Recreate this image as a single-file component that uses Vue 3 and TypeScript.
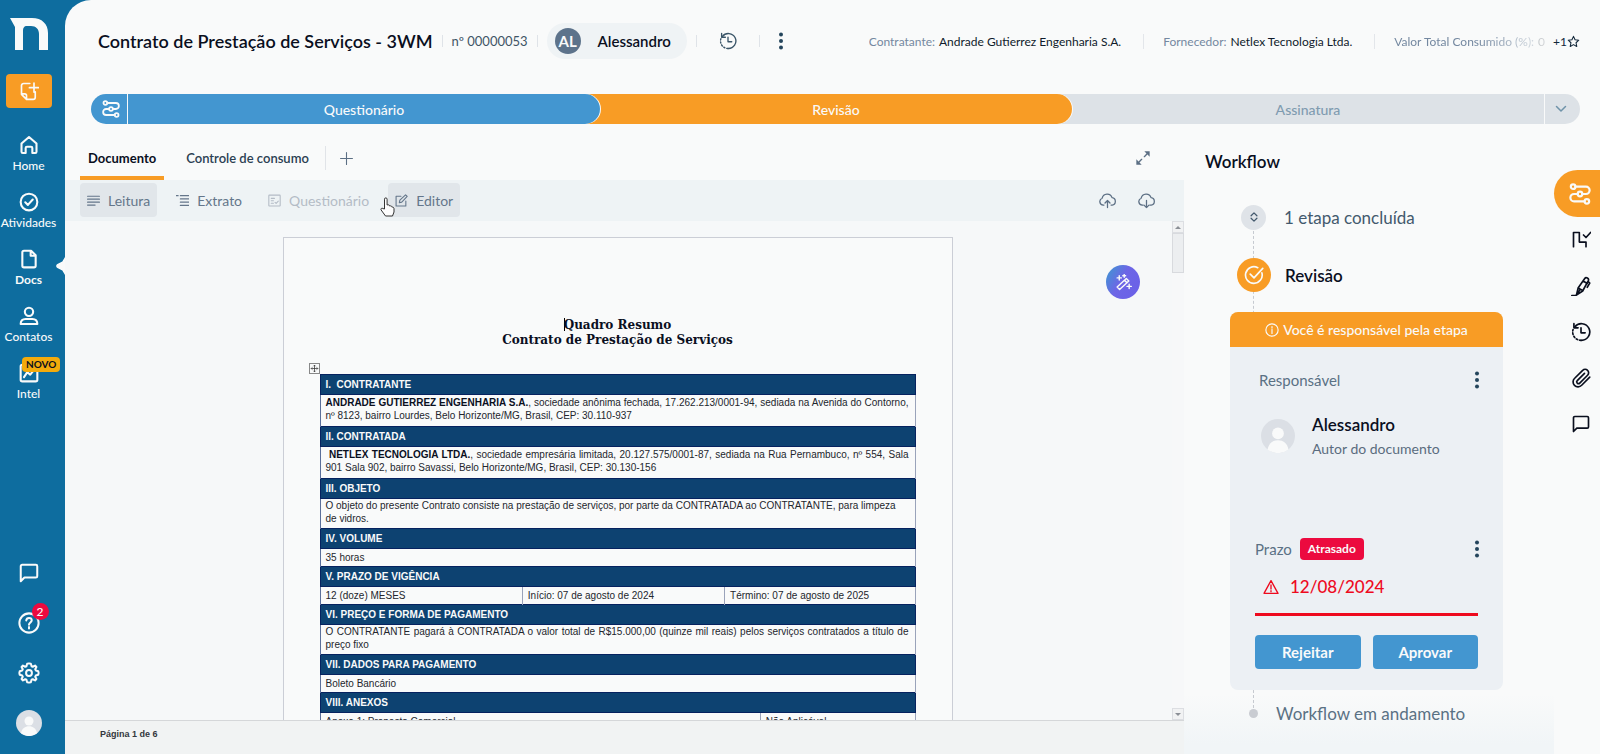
<script setup lang="ts">
import { ref } from 'vue'

interface NavItem {
  id: string
  label: string
  icon: string
  badge?: string
}

interface DocCell {
  text: string
  lead?: string
  span: number
}

interface DocSection {
  title: string
  size: 'tall' | 'mid' | 'short'
  justify?: boolean
  cells: DocCell[]
}

const nav: NavItem[] = [
  { id: 'home', label: 'Home', icon: 'i-home' },
  { id: 'atividades', label: 'Atividades', icon: 'i-check-circle' },
  { id: 'docs', label: 'Docs', icon: 'i-file' },
  { id: 'contatos', label: 'Contatos', icon: 'i-user' },
  { id: 'intel', label: 'Intel', icon: 'i-chart', badge: 'NOVO' },
]
const activeNav = ref('docs')

const tabs = ['Documento', 'Controle de consumo']
const activeTab = ref('Documento')

const tools = [
  { label: 'Leitura', icon: 'i-lines', filled: true, disabled: false },
  { label: 'Extrato', icon: 'i-list', filled: false, disabled: false },
  { label: 'Questionário', icon: 'i-form', filled: false, disabled: true },
  { label: 'Editor', icon: 'i-edit', filled: true, disabled: false },
]

const rail = [
  { label: 'Workflow', icon: 'i-flow' },
  { label: 'Tarefas', icon: 'i-tasks' },
  { label: 'Assinaturas', icon: 'i-pen' },
  { label: 'Histórico', icon: 'i-history' },
  { label: 'Anexos', icon: 'i-clip' },
  { label: 'Comentários', icon: 'i-chat' },
]
const activePanel = ref('Workflow')

const sections: DocSection[] = [
  {
    title: 'I.  CONTRATANTE',
    size: 'tall',
    justify: true,
    cells: [
      {
        lead: 'ANDRADE GUTIERREZ ENGENHARIA S.A.',
        text: ', sociedade anônima fechada, 17.262.213/0001-94, sediada na Avenida do Contorno, nº 8123, bairro Lourdes, Belo Horizonte/MG, Brasil, CEP: 30.110-937',
        span: 4,
      },
    ],
  },
  {
    title: 'II. CONTRATADA',
    size: 'tall',
    justify: true,
    cells: [
      {
        lead: '\u00a0NETLEX TECNOLOGIA LTDA.',
        text: ', sociedade empresária limitada, 20.127.575/0001-87, sediada na Rua Pernambuco, nº 554, Sala 901 Sala 902, bairro Savassi, Belo Horizonte/MG, Brasil, CEP: 30.130-156',
        span: 4,
      },
    ],
  },
  {
    title: 'III. OBJETO',
    size: 'mid',
    cells: [
      {
        text: 'O objeto do presente Contrato consiste na prestação de serviços, por parte da CONTRATADA ao CONTRATANTE, para limpeza de vidros.',
        span: 4,
      },
    ],
  },
  { title: 'IV. VOLUME', size: 'short', cells: [{ text: '35 horas', span: 4 }] },
  {
    title: 'V. PRAZO DE VIGÊNCIA',
    size: 'short',
    cells: [
      { text: '12 (doze) MESES', span: 1 },
      { text: 'Início: 07 de agosto de 2024', span: 1 },
      { text: 'Término: 07 de agosto de 2025', span: 2 },
    ],
  },
  {
    title: 'VI. PREÇO E FORMA DE PAGAMENTO',
    size: 'mid',
    justify: true,
    cells: [
      {
        text: 'O CONTRATANTE pagará à CONTRATADA o valor total de R$15.000,00 (quinze mil reais) pelos serviços contratados a título de preço fixo',
        span: 4,
      },
    ],
  },
  { title: 'VII. DADOS PARA PAGAMENTO', size: 'short', cells: [{ text: 'Boleto Bancário', span: 4 }] },
  {
    title: 'VIII. ANEXOS',
    size: 'short',
    cells: [
      { text: 'Anexo 1: Proposta Comercial', span: 3 },
      { text: 'Não Aplicável', span: 1 },
    ],
  },
]
</script>

<template>
  <div class="app">
    <svg class="sprite" aria-hidden="true">
      <symbol id="i-home" viewBox="0 0 24 24"><path d="M3 10.2 12 2.5l9 7.7V20a1.5 1.5 0 0 1-1.5 1.5H16v-6a1.5 1.5 0 0 0-1.500-1.500h-5A1.500 1.500 0 0 0 8 15.500v6H4.500A1.500 1.500 0 0 1 3 20z" /></symbol>
      <symbol id="i-check-circle" viewBox="0 0 24 24"><circle cx="12" cy="12" r="10" /><path d="m7.500 12.300 3.200 3.200 5.800-6.500" /></symbol>
      <symbol id="i-file" viewBox="0 0 24 24"><path d="M14.500 2H6a2 2 0 0 0-2 2v16a2 2 0 0 0 2 2h12a2 2 0 0 0 2-2V7.500zM14 2.500V8h5.500" /></symbol>
      <symbol id="i-user" viewBox="0 0 24 24"><circle cx="12" cy="7" r="5" /><path d="M2 21.500c0-4 2.500-6 6-6h8c3.500 0 6 2 6 6z" /></symbol>
      <symbol id="i-chart" viewBox="0 0 24 24"><rect x="2" y="2" width="20" height="20" rx="2" /><path d="m6 17 4-6 3.500 3L19 7" /></symbol>
      <symbol id="i-chat" viewBox="0 0 24 24"><path d="M4.500 3h15A1.500 1.500 0 0 1 21 4.500v11a1.500 1.500 0 0 1-1.500 1.500H7l-4 4V4.500A1.500 1.500 0 0 1 4.500 3z" /></symbol>
      <symbol id="i-help" viewBox="0 0 24 24"><circle cx="12" cy="12" r="10.500" /><path d="M9 9.200c.2-1.700 1.400-2.700 3-2.700s3 1 3 2.600c0 2.300-3 2.400-3 4.900M12 16.500v1.500" /></symbol>
      <symbol id="i-gear" viewBox="0 0 24 24"><circle cx="12" cy="12" r="3.200" /><path d="m12 1.500 2 .4.800 2.700 1.300.6 2.500-1.300 1.500 1.500-1.300 2.500.6 1.300 2.700.8.400 2-.4 2-2.700.8-.6 1.300 1.300 2.500-1.500 1.500-2.500-1.300-1.300.6-.8 2.700-2 .4-2-.4-.8-2.700-1.300-.6-2.500 1.300-1.500-1.500 1.300-2.500-.6-1.300-2.700-.8-.4-2 .4-2 2.700-.8.6-1.300-1.300-2.500 1.500-1.500 2.500 1.300 1.300-.6.800-2.700z" /></symbol>
      <symbol id="i-newdoc" viewBox="0 0 24 24"><path d="M13 3H5.500A2.500 2.500 0 0 0 3 5.500V16l6 6h8a2.500 2.500 0 0 0 2.500-2.500V13M3 15.500h4A2 2 0 0 1 9 17.500V22M18 2.500v11M12.500 8h11" /></symbol>
      <symbol id="i-flow" viewBox="0 0 24 24"><circle cx="4.500" cy="4" r="2.500" /><circle cx="12" cy="12" r="2.500" /><circle cx="19.500" cy="20" r="2.500" /><path d="M7 4h11.500a4 4 0 0 1 0 8h-4M9.500 12h-4a4 4 0 0 0 0 8H17" /></symbol>
      <symbol id="i-history" viewBox="0 0 24 24"><path d="M4.500 6A10 10 0 1 1 12 22" /><path d="M12 22A10 10 0 0 1 2.500 9" stroke-dasharray="1.800 2.400" /><path d="M3.500 2v5h5" /><path d="M12 7v6h5" /></symbol>
      <symbol id="i-dots" viewBox="0 0 6 18"><circle cx="3" cy="2.500" r="2" /><circle cx="3" cy="9" r="2" /><circle cx="3" cy="15.500" r="2" /></symbol>
      <symbol id="i-star" viewBox="0 0 24 24"><path d="m12 2.500 2.900 6.300 6.800.8-5 4.700 1.300 6.800L12 17.800l-6 3.300 1.300-6.800-5-4.700 6.800-.8z" /></symbol>
      <symbol id="i-down" viewBox="0 0 24 24"><path d="m3 7 9 9 9-9" /></symbol>
      <symbol id="i-updown" viewBox="0 0 24 24"><path d="m5 9 7-7 7 7M5 15l7 7 7-7" /></symbol>
      <symbol id="i-plus" viewBox="0 0 24 24"><path d="M12 1v22M1 12h22" /></symbol>
      <symbol id="i-expand" viewBox="0 0 24 24"><path d="M22 10V2h-8z M2 14v8h8z" fill="currentColor" stroke="none" /><path d="m19 5-5 5M5 19l5-5" /></symbol>
      <symbol id="i-lines" viewBox="0 0 24 24"><path d="M1 4h22M1 9.500h22M1 15h22M1 20.500h14" /></symbol>
      <symbol id="i-list" viewBox="0 0 24 24"><path d="M0 3h4M8 3h16M8 9h16M8 15h16M8 21h16" /></symbol>
      <symbol id="i-form" viewBox="0 0 24 24"><rect x="1.500" y="2" width="21" height="20" rx="1" /><path d="M6 8h6M6 12.500h4M6 17h4M13 15.500l2 2 4-4.500" /></symbol>
      <symbol id="i-edit" viewBox="0 0 24 24"><path d="M11 4H2v18h18v-9M8 16l1-4.500L19.500 1.500l3 3L12.500 15z" /></symbol>
      <symbol id="i-cloud-up" viewBox="0 0 24 24"><path d="M7 18.500H6A5 5 0 0 1 4.500 8.800 7.200 7.200 0 0 1 18.400 8a5.300 5.300 0 0 1 .1 10.500H17M12 22V12M8.500 15.500 12 12l3.500 3.500" /></symbol>
      <symbol id="i-cloud-down" viewBox="0 0 24 24"><path d="M7 18.500H6A5 5 0 0 1 4.500 8.800 7.200 7.200 0 0 1 18.400 8a5.300 5.300 0 0 1 .1 10.500H17M12 12v10M8.500 18.500 12 22l3.500-3.500" /></symbol>
      <symbol id="i-done" viewBox="0 0 24 24"><path d="M21.500 9.500A10 10 0 1 1 16.500 3.200M7.500 11l4.500 4.500L22.500 4" /></symbol>
      <symbol id="i-info" viewBox="0 0 24 24"><circle cx="12" cy="12" r="10.500" /><path d="M12 11v7M12 6v2.500" /></symbol>
      <symbol id="i-warn" viewBox="0 0 24 24"><path d="M12 2.500 22.500 21.500h-21zM12 9v6M12 17.500v1.500" /></symbol>
      <symbol id="i-tasks" viewBox="0 0 24 24"><path d="M3 20V3h7v11.500h8V20M15 6l3 3 5.500-6" /></symbol>
      <symbol id="i-pen" viewBox="0 0 24 24"><path d="M1 23.500h4.500M6.500 23l2-8.500L16.500 3c1.500-2.200 5.500-.2 4.300 2.500L14 18zM8.500 14.500 14 17.500M14.500 6l5 3M7 22.500l4-6.500M21 7l1.500 1.500-3 5" /></symbol>
      <symbol id="i-clip" viewBox="0 0 24 24"><path d="m22.500 11-9.700 9.700a6 6 0 0 1-8.600.2 6 6 0 0 1 .2-8.600L14 2.800a4.100 4.100 0 0 1 5.900 0 4.100 4.100 0 0 1 0 5.900l-9.400 9.400a2.100 2.100 0 0 1-3-3l8.700-8.600" /></symbol>
      <symbol id="i-wand" viewBox="0 0 24 24"><path d="m3 18.500 13-12 3.500 3.500-13 12zM13.500 9l3.500 3.500" /><path d="M6 2.500v6M3 5.500h6M20 14.500v6M17 17.500h6M13 .5v4M11 2.500h4" /></symbol>
      <symbol id="i-face" viewBox="0 0 26 26"><circle cx="13" cy="13" r="13" fill="#dbdfe5" /><circle cx="13" cy="11" r="4.500" fill="#f9fafa" /><path d="M5 23.300c1-5 4-7 8-7s7 2 8 7A13 13 0 0 1 5 23.300z" fill="#f9fafa" /></symbol>
    </svg>

    <aside class="sidebar">
      <a class="logo" href="#" aria-label="Início">
        <svg viewBox="0 0 38 32"><path fill="#f9fafa" d="M0 0h22c10 0 16 6 16 15v17h-9V16c0-5-3-8-8-8h-4c-3 0-4 2-4 5v19H5V9z" /></svg>
      </a>
      <button class="create" type="button" aria-label="Novo documento"><svg class="ico"><use href="#i-newdoc" /></svg></button>
      <nav class="nav">
        <a
          v-for="item in nav"
          :key="item.id"
          href="#"
          class="nav-item"
          :class="{ active: item.id === activeNav }"
          @click.prevent="activeNav = item.id"
        >
          <svg class="ico"><use :href="'#' + item.icon" /></svg>
          <span>{{ item.label }}</span>
          <span v-if="item.badge" class="new">{{ item.badge }}</span>
        </a>
      </nav>
      <div class="side-bottom">
        <button type="button" aria-label="Mensagens"><svg class="ico"><use href="#i-chat" /></svg></button>
        <button type="button" class="help"><svg class="ico"><use href="#i-help" /></svg><span class="count">2</span></button>
        <button type="button" aria-label="Configurações"><svg class="ico"><use href="#i-gear" /></svg></button>
        <button type="button" aria-label="Perfil"><svg class="face"><use href="#i-face" /></svg></button>
      </div>
    </aside>

    <main class="main">
      <header class="header">
        <h1>Contrato de Prestação de Serviços - 3WM</h1>
        <span class="sep"></span>
        <span class="number">nº 00000053</span>
        <span class="sep"></span>
        <div class="owner"><span class="initials">AL</span><span>Alessandro</span></div>
        <span class="sep"></span>
        <button class="plain history" type="button" aria-label="Histórico"><svg class="ico"><use href="#i-history" /></svg></button>
        <span class="sep"></span>
        <button class="plain" type="button" aria-label="Mais opções"><svg class="dots"><use href="#i-dots" /></svg></button>
        <dl class="facts">
          <div><dt>Contratante:</dt><dd>Andrade Gutierrez Engenharia S.A.</dd></div>
          <div><dt>Fornecedor:</dt><dd>Netlex Tecnologia Ltda.</dd></div>
          <div class="fade"><dt>Valor Total Consumido (%):</dt><dd>0</dd></div>
        </dl>
        <button class="plain more" type="button">+1<svg class="ico"><use href="#i-star" /></svg></button>
      </header>

      <div class="steps">
        <button class="cap first" type="button" aria-label="Fluxo"><svg class="ico"><use href="#i-flow" /></svg></button>
        <div class="step done">Questionário</div>
        <div class="step current">Revisão</div>
        <div class="step next">Assinatura</div>
        <button class="cap last" type="button" aria-label="Expandir etapas"><svg class="ico"><use href="#i-down" /></svg></button>
      </div>

      <div class="body">
        <section class="work">
          <div class="tabs">
            <button
              v-for="tab in tabs"
              :key="tab"
              type="button"
              class="tab"
              :class="{ active: tab === activeTab }"
              @click="activeTab = tab"
            >{{ tab }}</button>
            <span class="tab-sep"></span>
            <button class="plain add" type="button" aria-label="Adicionar aba"><svg class="ico"><use href="#i-plus" /></svg></button>
            <button class="plain expand" type="button" aria-label="Expandir"><svg class="ico"><use href="#i-expand" /></svg></button>
          </div>

          <div class="toolbar">
            <button v-for="tool in tools" :key="tool.label" type="button" class="tool" :class="{ filled: tool.filled }" :disabled="tool.disabled">
              <svg class="ico"><use :href="'#' + tool.icon" /></svg>{{ tool.label }}
            </button>
            <svg class="cursor" viewBox="0 0 15 20"><path d="M4.500 12V2.200a1.300 1.300 0 0 1 2.600 0V8c1.500-.5 2.500 0 2.500 1 1.300-.4 2.200.1 2.300 1.100 1.300-.2 2.100.5 2.100 1.700V15l-1.500 4H5.500L1 12.800c-.5-1.300 1-2.100 2-1.200z" /></svg>
            <div class="tool-right">
              <button class="plain" type="button" aria-label="Enviar"><svg class="ico"><use href="#i-cloud-up" /></svg></button>
              <button class="plain" type="button" aria-label="Baixar"><svg class="ico"><use href="#i-cloud-down" /></svg></button>
            </div>
          </div>

          <div class="canvas">
            <article class="page">
              <h2><span class="caret"></span>Quadro Resumo<br />Contrato de Prestação de Serviços</h2>
              <div class="table-wrap">
                <span class="anchor"><svg viewBox="0 0 12 12"><path d="M6 1.500v9M1.500 6h9M4.500 3 6 1.500 7.500 3M4.500 9 6 10.500 7.500 9M3 4.500 1.500 6 3 7.500M9 4.500 10.500 6 9 7.500" /></svg></span>
                <table>
                  <colgroup><col class="c1" /><col class="c2" /><col class="c3" /><col class="c4" /></colgroup>
                  <tbody v-for="section in sections" :key="section.title">
                    <tr class="head"><th colspan="4" scope="rowgroup">{{ section.title }}</th></tr>
                    <tr :class="[section.size, { justify: section.justify }]">
                      <td v-for="cell in section.cells" :key="cell.text" :colspan="cell.span"><b v-if="cell.lead">{{ cell.lead }}</b>{{ cell.text }}</td>
                    </tr>
                  </tbody>
                </table>
              </div>
            </article>
            <button class="magic" type="button" aria-label="Assistente"><svg class="ico"><use href="#i-wand" /></svg></button>
            <div class="scroll" aria-hidden="true"><i class="arrow up"></i><i class="thumb"></i><i class="arrow down"></i></div>
          </div>
          <footer class="status">Página 1 de 6</footer>
        </section>

        <aside class="workflow">
          <h2>Workflow</h2>
          <div class="flow">
            <div class="flow-row past">
              <button class="toggle" type="button" aria-label="Mostrar etapas"><svg class="ico"><use href="#i-updown" /></svg></button>
              <span>1 etapa concluída</span>
            </div>
            <div class="flow-row now">
              <span class="mark"><svg class="ico"><use href="#i-done" /></svg></span>
              <span>Revisão</span>
            </div>
            <div class="card">
              <div class="banner"><svg class="ico"><use href="#i-info" /></svg>Você é responsável pela etapa</div>
              <div class="card-body">
                <div class="card-line resp"><span>Responsável</span><button class="plain" type="button" aria-label="Opções do responsável"><svg class="dots"><use href="#i-dots" /></svg></button></div>
                <div class="person">
                  <svg class="face"><use href="#i-face" /></svg>
                  <div><strong>Alessandro</strong><span>Autor do documento</span></div>
                </div>
                <div class="card-line"><span>Prazo</span><span class="late">Atrasado</span><button class="plain" type="button" aria-label="Opções do prazo"><svg class="dots"><use href="#i-dots" /></svg></button></div>
                <div class="date"><svg class="ico"><use href="#i-warn" /></svg>12/08/2024</div>
                <div class="actions"><button type="button">Rejeitar</button><button type="button">Aprovar</button></div>
              </div>
            </div>
            <div class="flow-row end"><span class="dot"></span><span>Workflow em andamento</span></div>
          </div>
        </aside>

        <nav class="rail">
          <button
            v-for="item in rail"
            :key="item.label"
            type="button"
            :aria-label="item.label"
            :class="{ active: item.label === activePanel }"
            @click="activePanel = item.label"
          ><svg class="ico"><use :href="'#' + item.icon" /></svg></button>
        </nav>
      </div>
    </main>
  </div>
</template>

<style>
body {
  background: #f9fafa;
}
</style>

<style scoped>
.app {
  display: flex;
  height: 100vh;
  overflow: hidden;
  background: #0e6d9f;
  font-family: Lato, "Liberation Sans", sans-serif;
  color: #0a0f1e;
}
.app * { box-sizing: border-box; }
.sprite { position: absolute; width: 0; height: 0; }
button { font: inherit; color: inherit; border: 0; padding: 0; background: none; cursor: pointer; }
h1, h2, dl, dd { margin: 0; }
a { text-decoration: none; color: inherit; }
svg { display: block; flex: none; }
.ico { width: 20px; height: 20px; fill: none; stroke: currentColor; stroke-width: 2; stroke-linejoin: round; stroke-linecap: round; }
.dots { width: 6px; height: 18px; fill: #24455c; }
.plain { display: flex; align-items: center; justify-content: center; }

.sidebar { flex: none; width: 65px; padding: 18px 8px 18px 0; display: flex; flex-direction: column; align-items: center; color: #f9fafa; }
.logo svg { width: 38px; height: 32px; }
.create { margin: 24px 0 22px; width: 46px; height: 34px; border-radius: 4px; background: #f89c25; display: flex; align-items: center; justify-content: center; flex: none; }
.create .ico { stroke-width: 2; }
.nav { display: flex; flex-direction: column; align-self: stretch; }
.nav-item { position: relative; height: 57px; padding-top: 5px; display: flex; flex-direction: column; align-items: center; gap: 3px; font-size: 12px; line-height: 16px; font-weight: 500; }
.nav-item .ico { stroke-width: 2.500; }
.nav-item.active { font-weight: 700; }
.nav-item.active::after { content: ""; position: absolute; left: 56px; top: 13px; width: 9px; height: 18px; background: #f9fafa; clip-path: polygon(100% 0, 70% 25%, 10% 40%, 0 50%, 10% 60%, 70% 75%, 100% 100%); }
.new { position: absolute; left: 22px; top: -1px; padding: 0 4px; border-radius: 4px; background: #f3ab0c; color: #0a0f1e; font-size: 10px; line-height: 15px; font-weight: 700; }
.side-bottom { margin-top: auto; display: flex; flex-direction: column; align-items: center; gap: 24px; }
.side-bottom button { position: relative; height: 26px; display: flex; align-items: center; }
.side-bottom .ico { width: 22px; height: 22px; stroke-width: 2.200; }
.side-bottom .face { width: 26px; height: 26px; }
.count { position: absolute; left: 14px; top: -7px; width: 17px; height: 17px; border-radius: 50%; background: #ec0a3f; font-size: 12px; line-height: 17px; font-weight: 500; text-align: center; }

.main { flex: 1; min-width: 0; display: flex; flex-direction: column; background: #f9fafa; border-top-left-radius: 26px; }

.header { display: flex; align-items: center; height: 82px; padding: 0 20px 0 33px; flex: none; white-space: nowrap; }
.header h1 { font-size: 18px; line-height: 26px; font-weight: 600; }
.sep { flex: none; width: 1px; height: 12px; margin: 0 9px; background: #dfe3e8; }
.number { font-size: 13px; color: #3f5566; }
.owner { display: flex; align-items: center; gap: 17px; height: 36px; padding: 0 16px 0 8px; border-radius: 18px; background: #eff3f5; font-size: 15px; font-weight: 600; }
.initials { width: 26px; height: 26px; border-radius: 50%; background: #5d738b; color: #f9fafa; font-size: 15px; line-height: 26px; font-weight: 700; text-align: center; }
.history { margin: 0 13px; color: #3a5568; }
.history .ico { width: 18px; height: 18px; stroke-width: 1.800; }
.history + .sep { margin-right: 18px; }
.facts { margin-left: auto; display: flex; font-size: 12px; overflow: hidden; }
.facts div { display: flex; gap: 4px; }
.facts div + div { margin-left: 22px; padding-left: 19px; border-left: 1px solid #e3e6ea; }
.facts dt { color: #7488a0; }
.facts dd { color: #0f1b2b; }
.facts .fade { mask-image: linear-gradient(90deg, #000 60%, rgba(0, 0, 0, 0.15)); }
.more { margin-left: 8px; font-size: 12px; color: #12273a; }
.more .ico { width: 13px; height: 13px; }

.steps { display: flex; flex: none; height: 30px; margin: 12px 20px 0 26px; font-size: 14px; font-weight: 500; color: #f9fafa; }
.cap { flex: none; width: 36px; display: flex; align-items: center; justify-content: center; }
.cap.first { background: #4396d0; border-radius: 15px 0 0 15px; padding-left: 4px; }
.cap.first .ico { width: 18px; height: 18px; stroke-width: 2.400; }
.cap.last { background: #dde2e7; border-radius: 0 15px 15px 0; border-left: 1px solid #f9fafa; padding-right: 4px; color: #6f93a9; }
.cap.last .ico { width: 12px; height: 12px; stroke-width: 3; }
.step { flex: 1; display: flex; align-items: center; justify-content: center; border-radius: 0 15px 15px 0; }
.step.done { background: #4396d0; border-left: 1px solid #f9fafa; z-index: 2; box-shadow: 1px 0 0 #f9fafa; }
.step.current { background: #f89c25; z-index: 1; margin-left: -15px; padding-left: 15px; box-shadow: 1px 0 0 #f9fafa; }
.step.next { background: #dde2e7; color: #7f9bb0; margin-left: -15px; padding-left: 15px; border-radius: 0; }
.step.done, .step.current { position: relative; }

.body { flex: 1; min-height: 0; display: flex; }
.work { flex: 1; min-width: 0; display: flex; flex-direction: column; }
.tabs { display: flex; align-items: stretch; height: 56px; flex: none; padding: 12px 33px 0 15px; font-size: 13px; }
.tab { padding: 3px 8px 0; margin-right: 14px; color: #2b4052; border-bottom: 4px solid transparent; font-weight: 600; white-space: nowrap; }
.tab.active { color: #0a0f1e; font-weight: 700; border-bottom: 4px solid #f89c25; border-radius: 3px 3px 0 0; }
.tab-sep { width: 1px; height: 24px; align-self: center; margin: 0 14px 0 -6px; background: #e1e4e8; }
.add, .expand { color: #5c6f84; }
.add .ico { width: 13px; height: 13px; }
.expand { margin-left: auto; }
.expand .ico { width: 16px; height: 16px; }
.toolbar { position: relative; display: flex; align-items: flex-start; gap: 12px; height: 41px; flex: none; padding: 3px 29px 0 15px; background: #eef3f5; }
.tool { display: flex; align-items: center; gap: 8px; height: 34px; padding: 0 7px; border-radius: 4px; font-size: 14px; color: #64768a; white-space: nowrap; }
.tool .ico { width: 13px; height: 13px; }
.tool.filled { background: #e1e6ea; }
.tool:disabled { color: #b4bcc6; }
.cursor { position: absolute; left: 315px; top: 17px; width: 15px; height: 20px; fill: #fdfdfd; stroke: #333; stroke-width: 1; }
.tool-right { margin-left: auto; display: flex; height: 34px; gap: 22px; color: #5c6f84; }
.tool-right .ico { width: 17px; height: 17px; stroke-width: 1.800; }

.canvas { position: relative; flex: 1; min-height: 0; overflow: hidden; background: #f6f8f9; border-bottom: 1px solid #d5d7d9; }
.page { width: 670px; min-height: 900px; margin: 16px auto 0; padding: 80px 36px 0; background: #f9fafa; border: 1px solid #cbced6; }
.canvas .page { margin-left: calc((100% - 684px) / 2); }
.page h2 { text-align: center; font-family: "DejaVu Serif", serif; font-size: 12px; line-height: 15px; font-weight: 700; }
.caret { display: inline-block; width: 1px; height: 13px; margin-right: -1px; vertical-align: -2px; background: #000; }
.table-wrap { position: relative; margin-top: 26px; }
.anchor { position: absolute; left: -11px; top: -11px; width: 11px; height: 11px; border: 1px solid #888; }
.anchor svg { width: 9px; height: 9px; fill: none; stroke: #333; stroke-width: 1; }
table { width: 100%; table-layout: fixed; border-collapse: collapse; font-family: "Liberation Sans", Arial, sans-serif; font-size: 10px; line-height: 13px; color: #23262d; }
.c1 { width: 34%; }
.c2 { width: 34%; }
.c3 { width: 6%; }
th { padding: 0 5px; height: 20px; text-align: left; white-space: pre; background: #0d4271; color: #f9fafa; border: 1px solid #06225f; font-weight: 700; }
td { padding: 0 6px 0 5px; vertical-align: middle; border-left: 1px solid #5a6f9a; border-right: 1px solid #9aa3ba; }
.tall td { height: 32px; padding-bottom: 4px; }
.mid td { height: 30px; padding-bottom: 3px; }
.short td { height: 18px; }
.justify td { text-align: justify; }
td b { color: #0a0f1e; }
.magic { position: absolute; right: 44px; top: 44px; width: 34px; height: 34px; border-radius: 50%; background: linear-gradient(120deg, #3a9bd0, #6d66e6 45%, #6a5fe8); color: #f9fafa; display: flex; align-items: center; justify-content: center; }
.magic .ico { width: 17px; height: 17px; }
.scroll { position: absolute; right: 0; top: 0; bottom: 0; width: 12px; display: flex; flex-direction: column; background: #f7f8f9; }
.arrow { height: 12px; border: 1px solid #dcdee2; background: #f1f2f3; display: flex; align-items: center; justify-content: center; }
.arrow::after { content: ""; border: 3px solid transparent; border-top: 0; border-bottom-color: #8b8f96; }
.arrow.down { margin-top: auto; }
.arrow.down::after { transform: rotate(180deg); }
.thumb { height: 40px; border: 1px solid #d8dade; background: #eceef0; }
.status { flex: none; height: 33px; padding: 5px 35px; background: #f1f3f3; font-family: "Liberation Sans", Arial, sans-serif; font-size: 9px; line-height: 16px; font-weight: 700; color: #33373d; }

.workflow { flex: none; width: 370px; padding: 27px 51px 0 21px; background: linear-gradient(180deg, #f9fafa 570px, #f1f5f7 620px); }
.workflow h2 { font-size: 17px; line-height: 22px; font-weight: 600; }
.flow { position: relative; margin: 31px 0 0 25px; }
.flow::before { content: ""; position: absolute; left: 23px; top: 12px; bottom: 12px; border-left: 1px dashed #c6cad0; }
.flow-row { position: relative; display: flex; align-items: center; font-size: 17px; color: #43596d; }
.past { height: 26px; gap: 18px; padding-left: 11px; }
.toggle { width: 25px; height: 25px; border-radius: 50%; background: #dfe3e8; display: flex; align-items: center; justify-content: center; }
.toggle .ico { width: 10px; height: 12px; stroke-width: 3; }
.now { height: 34px; margin: 28px 0 20px; gap: 14px; padding-left: 7px; color: #0a0f1e; font-weight: 600; }
.mark { width: 34px; height: 34px; border-radius: 50%; background: #f89c25; color: #f9fafa; display: flex; align-items: center; justify-content: center; }
.card { position: relative; border-radius: 8px; background: #ecf0f4; overflow: hidden; }
.banner { height: 35px; display: flex; align-items: center; justify-content: center; gap: 4px; background: #f89c25; color: #f9fafa; font-size: 14px; font-weight: 500; }
.banner .ico { width: 14px; height: 14px; }
.card-body { padding: 22px 25px 21px; }
.card-line { display: flex; align-items: center; gap: 8px; height: 22px; font-size: 15px; color: #5a7184; }
.card-line .plain { margin-left: auto; width: 6px; margin-right: -2px; }
.resp { padding-left: 4px; }
.person { display: flex; align-items: center; gap: 17px; margin: 21px 0 78px 6px; height: 48px; }
.person .face { width: 34px; height: 34px; }
.person strong { display: block; font-size: 17px; line-height: 26px; font-weight: 600; }
.person span { display: block; font-size: 14px; line-height: 22px; color: #5a6c7e; }
.late { padding: 0 8px; border-radius: 4px; background: #ec0a3f; color: #f9fafa; font-size: 12px; line-height: 22px; font-weight: 700; }
.date { display: flex; align-items: center; gap: 11px; height: 56px; padding-left: 8px; border-bottom: 3px solid #ee0a1e; color: #ee0a1e; font-size: 17px; font-weight: 500; }
.date .ico { width: 16px; height: 16px; }
.actions { display: flex; gap: 12px; margin-top: 19px; }
.actions button { flex: 1; height: 34px; border-radius: 4px; background: #4396d0; color: #f9fafa; font-size: 15px; font-weight: 700; }
.end { margin-top: 11px; height: 24px; gap: 18px; padding-left: 19px; color: #5a7184; }
.dot { width: 9px; height: 9px; border-radius: 50%; background: #c9ccd2; }

.rail { flex: none; width: 46px; display: flex; flex-direction: column; padding-top: 46px; }
.rail button { height: 46px; display: flex; align-items: center; justify-content: center; padding-left: 8px; flex: none; color: #0a0f1e; }
.rail .ico { stroke-width: 2; }
.rail .active { height: 47px; padding-left: 6px; background: #f89c25; color: #f9fafa; border-radius: 24px 0 0 24px; }
.rail .active .ico { width: 22px; height: 22px; stroke-width: 2.400; }
</style>
